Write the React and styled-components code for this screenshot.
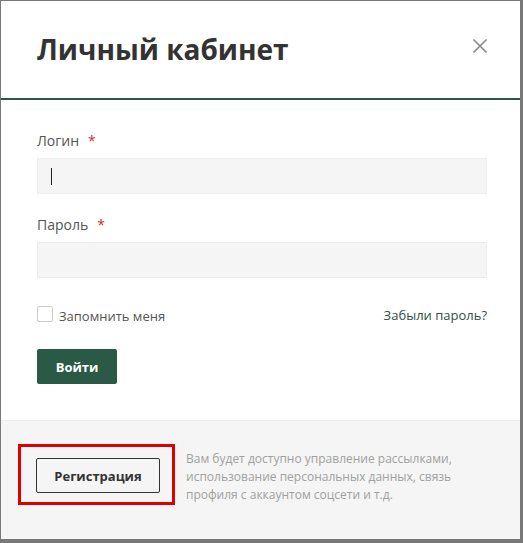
import React from 'react';
import styled, { createGlobalStyle } from 'styled-components';

const GlobalStyle = createGlobalStyle`
  html, body {
    margin: 0;
    padding: 0;
    background: #787878;
    font-family: "Open Sans", "Liberation Sans", sans-serif;
  }
  * { box-sizing: border-box; }
`;

const green = '#2a5a46';

const Modal = styled.div`
  margin: 1px 3px 0 1px;
  width: 519px;
  height: 538px;
  background: #fff;
  display: flex;
  flex-direction: column;
`;

const Header = styled.div`
  height: 99px;
  padding: 0 36px;
  display: flex;
  align-items: center;
  justify-content: space-between;
  border-bottom: 2px solid ${green};
`;

const Title = styled.h1`
  margin: 0 0 2px;
  font-size: 28px;
  font-weight: 700;
  color: #333;
`;

const Close = styled.button`
  border: 0;
  background: none;
  padding: 0;
  width: 16px;
  height: 16px;
  margin-right: -4px;
  margin-bottom: 8px;
  cursor: pointer;
`;

const Body = styled.form`
  padding: 31px 36px 0;
  flex: 1;
`;

const Field = styled.div`
  margin-bottom: 21px;
`;

const Label = styled.label`
  display: block;
  font-size: 14px;
  color: #555;
  line-height: 20px;
  margin-bottom: 7px;
`;

const Star = styled.span`
  color: #d32f2f;
  margin-left: 9px;
`;

const Input = styled.input`
  display: block;
  width: 450px;
  height: 36px;
  background: #f5f5f5;
  border: 1px solid #ededed;
  padding: 0 14px;
  font: inherit;
  outline: none;
`;

const Caret = styled.div`
  position: relative;
  &::after {
    content: '';
    position: absolute;
    left: 14px;
    top: 10px;
    width: 1px;
    height: 17px;
    background: #222;
  }
`;

const Options = styled.div`
  display: flex;
  align-items: center;
  justify-content: space-between;
  width: 450px;
  margin-top: 29px;
  margin-bottom: -2px;
`;

const Remember = styled.label`
  display: flex;
  align-items: center;
  gap: 6px;
  font-size: 13px;
  color: #555;
`;

const Box = styled.span`
  width: 16px;
  height: 16px;
  border: 1px solid #ccc;
  border-radius: 2px;
  background: #fff;
  margin-top: -4px;
`;

const Forgot = styled.a`
  font-size: 13px;
  color: #2f4f42;
  text-decoration: none;
  margin-top: -3px;
`;

const Submit = styled.button`
  margin-top: 26px;
  width: 80px;
  height: 35px;
  background: ${green};
  color: #fff;
  border: 0;
  border-radius: 2px;
  font-family: inherit;
  font-weight: 700;
  font-size: 13px;
`;

const Footer = styled.div`
  height: 119px;
  background: #f5f5f5;
  border-top: 1px solid #ececec;
  display: flex;
  align-items: flex-start;
  padding: 23px 0 0 17px;
  gap: 11px;
`;

const Highlight = styled.div`
  border: 3px solid #e00000;
  padding: 11px 12px 9px 15px;
`;

const Register = styled.button`
  display: block;
  width: 124px;
  height: 35px;
  background: transparent;
  border: 1px solid #333;
  border-radius: 2px;
  font-family: inherit;
  font-weight: 700;
  font-size: 13px;
  color: #333;
`;

const Note = styled.p`
  margin: 6px 0 0;
  font-size: 12px;
  line-height: 18px;
  color: #a0a0a0;
  width: 290px;
`;

export default function App() {
  return (
    <>
      <GlobalStyle />
      <Modal>
        <Header>
          <Title>Личный кабинет</Title>
          <Close aria-label="Закрыть">
            <svg width="16" height="16" viewBox="0 0 16 16">
              <path d="M1.5 1.5 L14.5 14.5 M14.5 1.5 L1.5 14.5" stroke="#8a8a8a" strokeWidth="1.7" fill="none" />
            </svg>
          </Close>
        </Header>
        <Body>
          <Field>
            <Label>Логин<Star>*</Star></Label>
            <Caret>
              <Input type="text" />
            </Caret>
          </Field>
          <Field>
            <Label>Пароль<Star>*</Star></Label>
            <Input type="password" />
          </Field>
          <Options>
            <Remember><Box />Запомнить меня</Remember>
            <Forgot href="#">Забыли пароль?</Forgot>
          </Options>
          <Submit type="button">Войти</Submit>
        </Body>
        <Footer>
          <Highlight>
            <Register type="button">Регистрация</Register>
          </Highlight>
          <Note>
            Вам будет доступно управление рассылками, использование персональных данных, связь профиля с аккаунтом соцсети и т.д.
          </Note>
        </Footer>
      </Modal>
    </>
  );
}
